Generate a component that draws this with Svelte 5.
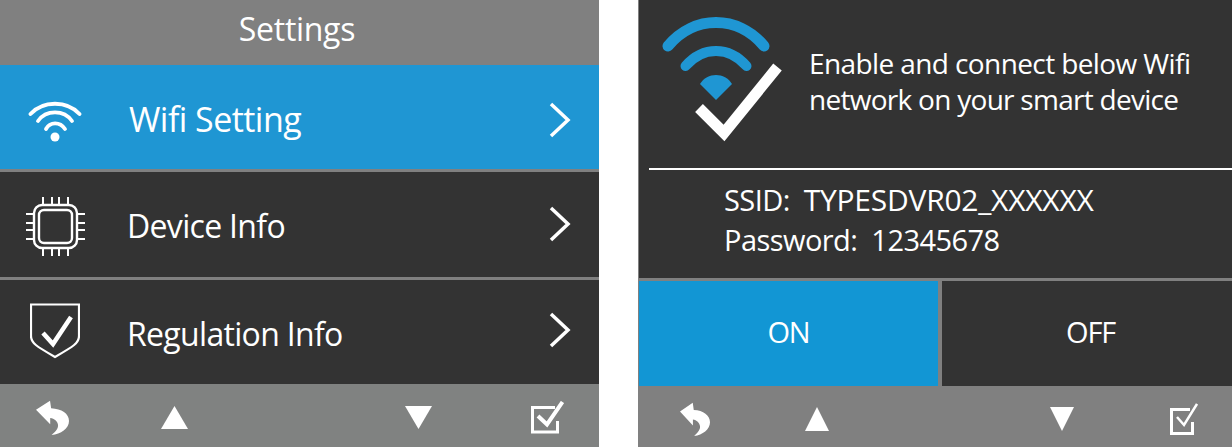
<script>
	const rows = [
		{ label: 'Wifi Setting', icon: 'wifi', active: true },
		{ label: 'Device Info', icon: 'chip', active: false },
		{ label: 'Regulation Info', icon: 'shield', active: false }
	];
</script>

{#snippet footer(kind)}
	<div class="footer">
		<svg class="back" viewBox="0 0 36 36" preserveAspectRatio="none">
			<path d="M0 10 L15.3 0.7 L16.5 8.5 C28 9 36 14 36 21.5 C36 29 27 35 17 36 C22 32 24.5 29 24 25.5 C23.5 22 20 19 15.5 18.5 L15.5 25 Z" fill="#fff" />
		</svg>
		<svg class="tri up" viewBox="0 0 28 24" preserveAspectRatio="none"><path d="M14 0 L28 24 H0 Z" fill="#fff" /></svg>
		<span class="space"></span>
		<svg class="tri" viewBox="0 0 28 24" preserveAspectRatio="none"><path d="M0 0 H28 L14 24 Z" fill="#fff" /></svg>
		{#if kind === 'left'}
			<svg class="tick" viewBox="0 0 33 33" fill="none" stroke="#fff">
				<path d="M24 6.5 H1.5 V31 H26.5 V20" stroke-width="3" />
				<path d="M7 15 L16 23.5 L31.5 1" stroke-width="4" />
			</svg>
		{:else}
			<svg class="tick" viewBox="0 0 28 32" fill="none" stroke="#fff">
				<path d="M20 6.5 H1.5 V30.5 H22.5 V19" stroke-width="3" />
				<path d="M7 14 L14 22 L27 1" stroke-width="2.5" />
			</svg>
		{/if}
	</div>
{/snippet}

<div class="screen">
	<section class="panel left">
		<h1>Settings</h1>
		{#each rows as row}
			<div class="row {row.icon}" class:active={row.active}>
				<span class="icon">
					{#if row.icon === 'wifi'}
						<svg viewBox="0 0 54 41" width="54" height="41" fill="none" stroke="#fff" stroke-width="3.8" stroke-linecap="round">
							<path d="M2.5 13 C15 -0.7 39 -0.7 51.5 13" />
							<path d="M10 20 C18 8.5 36 8.5 44 20" />
							<path d="M18 28 C22 20.5 32 20.5 37 28" />
							<circle cx="27" cy="36" r="4.5" fill="#fff" stroke="none" />
						</svg>
					{:else if row.icon === 'chip'}
						<svg viewBox="0 0 59 59" width="59" height="59" fill="none" stroke="#fff">
							<rect x="8" y="8" width="43" height="43" rx="8" stroke-width="2.4" />
							<rect x="13" y="13" width="33" height="33" rx="5" stroke-width="2.4" />
							<path d="M17 0 V8 M26 0 V8 M33 0 V8 M42 0 V8 M17 51 V59 M26 51 V59 M33 51 V59 M42 51 V59 M0 17 H8 M0 26 H8 M0 33 H8 M0 42 H8 M51 17 H59 M51 26 H59 M51 33 H59 M51 42 H59" stroke-width="2" />
						</svg>
					{:else}
						<svg viewBox="0 0 50 56" width="50" height="56" fill="none" stroke="#fff">
							<path d="M1 1.5 H49 V33 C49 40 44 43 25 54 C6 43 1 40 1 33 Z" stroke-width="2.2" />
							<path d="M13 30 L23 41 L41 14" stroke-width="4.5" />
						</svg>
					{/if}
				</span>
				<span class="label">{row.label}</span>
				<svg class="chev" viewBox="0 0 22 36" width="22" height="36" fill="none" stroke="#fff" stroke-width="3.5"><path d="M2 2 L19 18 L2 34" /></svg>
			</div>
		{/each}
		{@render footer('left')}
	</section>

	<section class="panel right">
		<div class="info">
			<div class="intro">
				<svg viewBox="0 0 122 127" width="122" height="127" fill="none">
					<path d="M8 31 C34 -0.3 78 -0.3 104 31" stroke="#1f96d3" stroke-width="11" stroke-linecap="round" />
					<path d="M25.5 51 C43 31 69 31 86.5 51" stroke="#1f96d3" stroke-width="10" stroke-linecap="round" />
					<path d="M40 69 C47 57 65 57 72 69 L56 85 Z" fill="#1f96d3" />
					<path d="M39 93 L64 118 L117.5 52" stroke="#fff" stroke-width="11" />
				</svg>
				<p><span>Enable and connect below Wifi</span><br /><span class="second">network on your smart device</span></p>
			</div>
			<div class="creds">
				<div>SSID:&nbsp; <span class="ssid">TYPESDVR02_XXXXXX</span></div>
				<div>Password:&nbsp; 12345678</div>
			</div>
		</div>
		<div class="toggle">
			<div class="on">ON</div>
			<div class="off">OFF</div>
		</div>
		{@render footer('right')}
	</section>
</div>

<style>
	:global(body) {
		background: #fff;
	}
	.screen {
		display: flex;
		justify-content: space-between;
		width: 1232px;
		height: 447px;
		font-family: 'Open Sans', 'Liberation Sans', sans-serif;
		color: #fff;
		overflow: hidden;
	}
	.panel {
		display: flex;
		flex-direction: column;
		background: #333;
	}
	.left {
		width: 599px;
	}
	.right {
		width: 594px;
		border-left: 1px solid #808080;
		box-sizing: border-box;
	}
	h1 {
		margin: 0;
		height: 65px;
		padding-right: 5px;
		background: #808080;
		font-size: 32px;
		font-weight: 400;
		line-height: 58px;
		text-align: center;
		letter-spacing: -0.3px;
	}
	.row {
		display: flex;
		align-items: center;
		height: 105px;
		border-bottom: 3px solid #808080;
		font-size: 32px;
		letter-spacing: -0.68px;
	}
	.row.shield {
		height: 104px;
		border-bottom: 0;
	}
	.row.active {
		height: 104px;
		background: #1f96d3;
		font-size: 34px;
		letter-spacing: -0.55px;
	}
	.icon {
		display: flex;
		justify-content: center;
		width: 110px;
		margin-right: 17px;
	}
	.wifi .icon {
		margin-top: 9px;
	}
	.chip .icon {
		margin-top: 3px;
	}
	.shield .icon {
		margin-bottom: 3px;
	}
	.label {
		flex: 1;
		padding-top: 2px;
	}
	.active .label {
		margin-left: 2px;
		padding-top: 4px;
	}
	.chev {
		margin-right: 28px;
	}
	.active .chev {
		margin-top: 6px;
	}
	.chip .chev {
		margin-bottom: 2px;
	}
	.shield .chev {
		margin-bottom: 4px;
	}
	.footer {
		display: flex;
		align-items: center;
		flex: 1;
		background: #808080;
	}
	.left .footer {
		padding-top: 4px;
		background: #808281;
	}
	.right .footer {
		padding-top: 5px;
	}
	.space {
		flex: 1;
	}
	.left .back {
		width: 33px;
		height: 35px;
		margin-left: 36px;
	}
	.left .tri {
		width: 27px;
		height: 23px;
	}
	.left .up {
		margin-left: 92px;
	}
	.left .tick {
		width: 33px;
		height: 33px;
		margin-left: 99px;
		margin-right: 35px;
	}
	.right .back {
		width: 30px;
		height: 34px;
		margin-left: 41px;
	}
	.right .tri {
		width: 24px;
		height: 24px;
	}
	.right .up {
		margin-left: 95px;
	}
	.right .tick {
		width: 28px;
		height: 32px;
		margin-left: 96px;
		margin-right: 34px;
	}
	.info {
		height: 278px;
	}
	.intro {
		display: flex;
		align-items: center;
		height: 168px;
		margin-left: 10px;
		border-bottom: 2px solid #fff;
		gap: 27px;
	}
	.intro svg {
		flex: none;
		margin-left: 11px;
		margin-bottom: 11px;
	}
	.intro p {
		margin: -6px 0 0;
		font-size: 28px;
		line-height: 36px;
		letter-spacing: -0.6px;
	}
	.second {
		letter-spacing: -0.72px;
	}
	.creds {
		padding: 10px 0 0 85px;
		font-size: 29px;
		line-height: 40px;
		letter-spacing: -0.55px;
	}
	.ssid {
		font-size: 30px;
		letter-spacing: -0.25px;
	}
	.toggle {
		display: flex;
		height: 105px;
		border-top: 3px solid #808080;
		font-size: 29px;
		line-height: 102px;
		text-align: center;
		letter-spacing: -1.2px;
	}
	.on {
		width: 299px;
		background: #1296d4;
	}
	.off {
		flex: 1;
		padding-left: 7px;
		border-left: 4px solid #808080;
	}
</style>
